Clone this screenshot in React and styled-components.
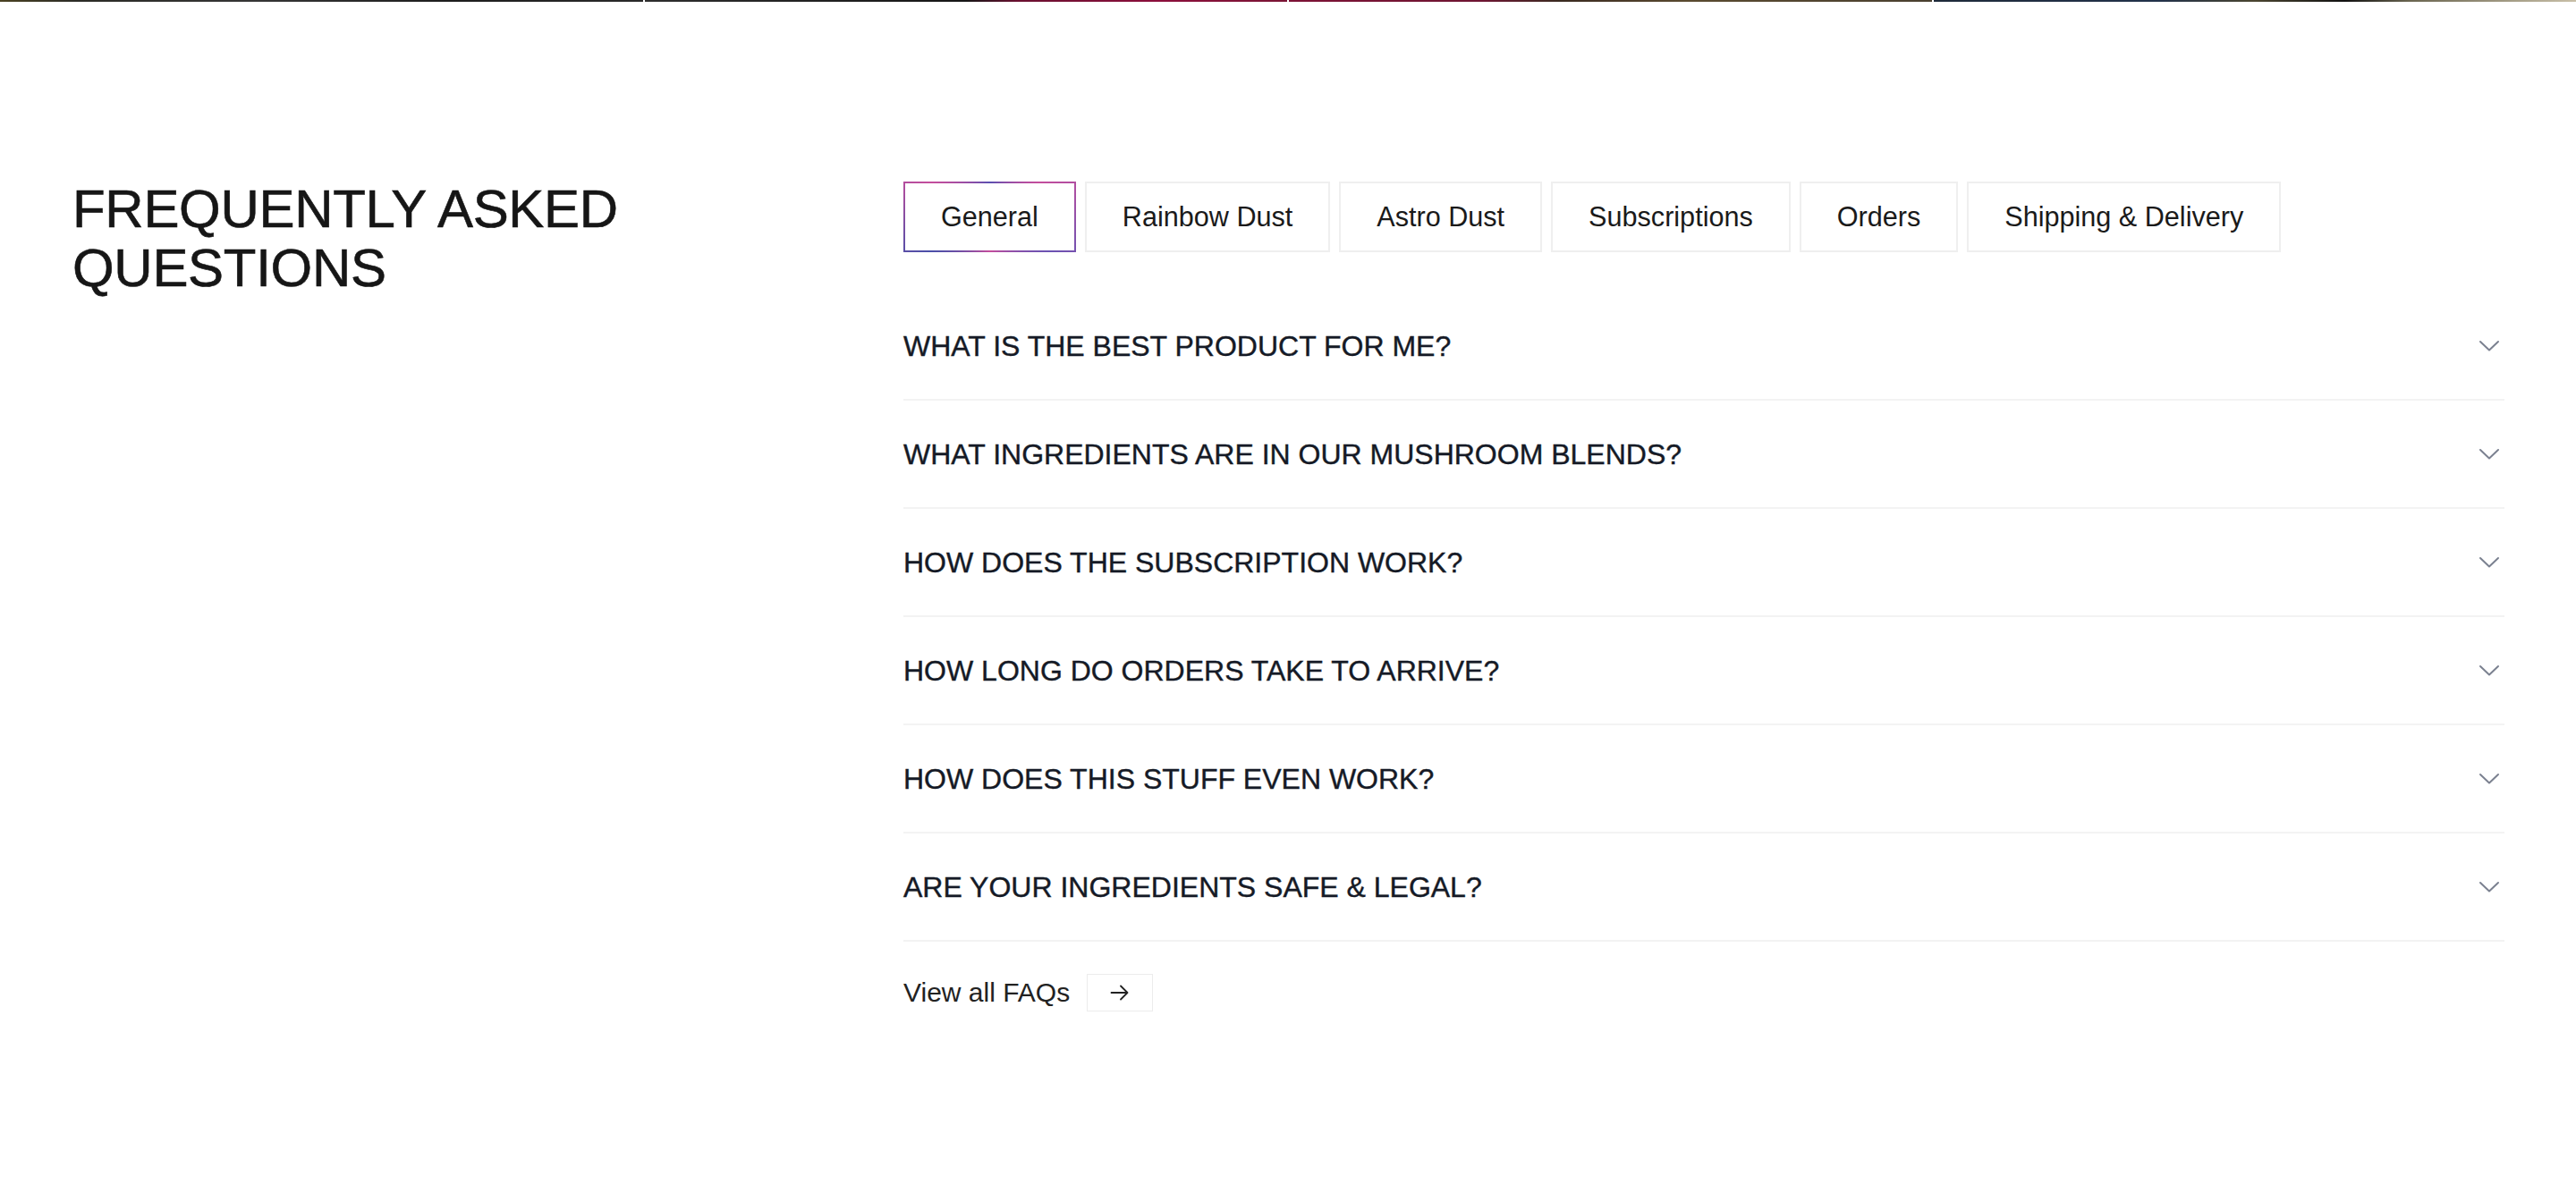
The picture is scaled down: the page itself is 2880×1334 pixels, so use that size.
import React from "react";
import styled, { createGlobalStyle } from "styled-components";

const GlobalStyle = createGlobalStyle`
	html, body {
		margin: 0;
		padding: 0;
		background: #ffffff;
	}
	body {
		font-family: "Liberation Sans", Arial, sans-serif;
		color: #161616;
	}
`;

const slices = [
	"linear-gradient(90deg, #4a4222 0%, #2b2b26 12%, #363636 40%, #1d1d1d 70%, #2a2a2a 100%)",
	"linear-gradient(90deg, #2e2e2e 0%, #161616 50%, #6a1030 58%, #8c0f3c 80%, #7a1535 100%)",
	"linear-gradient(90deg, #7d1236 0%, #6e1532 30%, #3a2a20 42%, #5a4a30 62%, #4a4030 100%)",
	"linear-gradient(90deg, #1e2a3a 0%, #22324a 35%, #4a4530 50%, #111111 64%, #6a6550 74%, #c9c0a8 100%)",
];

const tabs = [
	"General",
	"Rainbow Dust",
	"Astro Dust",
	"Subscriptions",
	"Orders",
	"Shipping & Delivery",
];

const questions = [
	"WHAT IS THE BEST PRODUCT FOR ME?",
	"WHAT INGREDIENTS ARE IN OUR MUSHROOM BLENDS?",
	"HOW DOES THE SUBSCRIPTION WORK?",
	"HOW LONG DO ORDERS TAKE TO ARRIVE?",
	"HOW DOES THIS STUFF EVEN WORK?",
	"ARE YOUR INGREDIENTS SAFE & LEGAL?",
];

const ChevronIcon = () => (
	<svg width="26" height="14" viewBox="0 0 26 14" fill="none">
		<polyline
			points="3,2 13,11.5 23,2"
			stroke="#7b8190"
			strokeWidth="2"
			strokeLinecap="round"
			strokeLinejoin="round"
		/>
	</svg>
);

const ArrowIcon = () => (
	<svg width="22" height="18" viewBox="0 0 22 18" fill="none">
		<path
			d="M1.5 9h18M12 1.5 19.5 9 12 16.5"
			stroke="#222222"
			strokeWidth="1.8"
			strokeLinecap="round"
			strokeLinejoin="round"
		/>
	</svg>
);

const App = () => {
	const active = "General";
	return (
		<Page>
			<GlobalStyle />
			<ImageStrip>
				{slices.map((bg, i) => (
					<Slice key={i} $bg={bg} />
				))}
			</ImageStrip>
			<Section>
				<Title>
					FREQUENTLY ASKED
					<br />
					QUESTIONS
				</Title>
				<Content>
					<Tabs>
						{tabs.map((t) => (
							<Tab key={t} $active={t === active}>
								{t}
							</Tab>
						))}
					</Tabs>
					<List>
						{questions.map((q) => (
							<Item key={q}>
								<Question>{q}</Question>
								<ChevronWrap>
									<ChevronIcon />
								</ChevronWrap>
							</Item>
						))}
					</List>
					<ViewAll>
						<span>View all FAQs</span>
						<ArrowButton aria-label="View all FAQs">
							<ArrowIcon />
						</ArrowButton>
					</ViewAll>
				</Content>
			</Section>
		</Page>
	);
};

export default App;

const Page = styled.div`
	min-height: 1334px;
	background: #ffffff;
`;

const ImageStrip = styled.div`
	display: flex;
	gap: 2px;
	height: 2px;
	overflow: hidden;
`;

const Slice = styled.div`
	flex: 1;
	background: ${(p) => p.$bg};
`;

const Section = styled.section`
	display: grid;
	grid-template-columns: 929px 1fr;
	padding: 199px 80px 0 81px;
`;

const Title = styled.h2`
	margin: 0;
	font-size: 60px;
	line-height: 66px;
	font-weight: 400;
	color: #161616;
	letter-spacing: -0.3px;
	-webkit-text-stroke: 0.6px #161616;
`;

const Content = styled.div`
	display: flex;
	flex-direction: column;
`;

const Tabs = styled.div`
	display: flex;
	gap: 10px;
	margin-top: 2px;
`;

const Tab = styled.button`
	font-family: "Liberation Sans", Arial, sans-serif;
	font-size: 30.6px;
	line-height: 35px;
	color: #1a1a1a;
	padding: 20px 40px;
	border: 2px solid ${(p) => (p.$active ? "transparent" : "#efefef")};
	border-radius: 0;
	cursor: pointer;
	background: ${(p) =>
		p.$active
			? `linear-gradient(#fff, #fff) padding-box,
			   conic-gradient(from 0deg at 50% 50%, #5a4fb0 0deg, #c44d9c 55deg, #6a52b2 120deg, #c44d9c 180deg, #4a4fa8 240deg, #c44d9c 300deg, #5a4fb0 360deg) border-box`
			: "#ffffff"};
`;

const List = styled.div`
	display: flex;
	flex-direction: column;
	margin-top: 45px;
`;

const Item = styled.div`
	display: flex;
	align-items: center;
	justify-content: space-between;
	padding: 44px 0 43px;
	border-bottom: 2px solid #f3f3f3;
`;

const Question = styled.span`
	font-size: 32px;
	line-height: 32px;
	color: #151a26;
	-webkit-text-stroke: 0.4px #151a26;
`;

const ChevronWrap = styled.span`
	display: flex;
	margin-right: 4px;
`;

const ViewAll = styled.div`
	display: flex;
	align-items: center;
	gap: 19px;
	margin-top: 36px;
	font-size: 30px;
	line-height: 42px;
	color: #222222;
`;

const ArrowButton = styled.button`
	display: flex;
	align-items: center;
	justify-content: center;
	width: 74px;
	height: 42px;
	padding: 0;
	background: #ffffff;
	border: 1px solid #ececec;
	cursor: pointer;
`;
